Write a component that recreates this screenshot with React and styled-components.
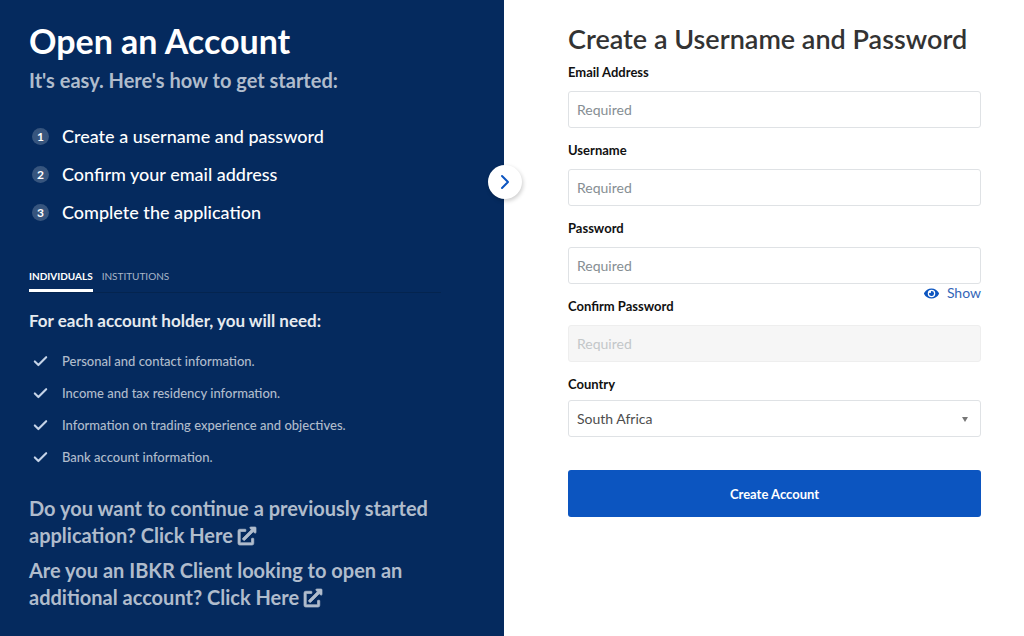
import React, { useState } from "react";
import styled, { createGlobalStyle } from "styled-components";
import { Check, ChevronRight } from "lucide-react";
import { FaExternalLinkAlt, FaEye } from "react-icons/fa";

const steps = [
  "Create a username and password",
  "Confirm your email address",
  "Complete the application",
];

const tabs = [
  { key: "individuals", label: "Individuals" },
  { key: "institutions", label: "Institutions" },
];

const requirements = [
  "Personal and contact information.",
  "Income and tax residency information.",
  "Information on trading experience and objectives.",
  "Bank account information.",
];

const App = () => {
  const [activeTab, setActiveTab] = useState("individuals");
  const [showPassword, setShowPassword] = useState(false);

  return (
    <>
      <GlobalStyle />
      <StyledPage>
        <StyledIntro>
          <StyledTitle>Open an Account</StyledTitle>
          <StyledSubtitle>It's easy. Here's how to get started:</StyledSubtitle>

          <StyledSteps>
            {steps.map((step, index) => (
              <StyledStep key={step}>
                <StyledStepNumber>{index + 1}</StyledStepNumber>
                {step}
              </StyledStep>
            ))}
          </StyledSteps>

          <StyledTabs role="tablist">
            {tabs.map((tab) => (
              <StyledTab
                key={tab.key}
                type="button"
                role="tab"
                aria-selected={activeTab === tab.key}
                $active={activeTab === tab.key}
                onClick={() => setActiveTab(tab.key)}
              >
                {tab.label}
              </StyledTab>
            ))}
          </StyledTabs>

          <StyledListTitle>For each account holder, you will need:</StyledListTitle>
          <StyledRequirements>
            {requirements.map((item) => (
              <StyledRequirement key={item}>
                <Check size={17} strokeWidth={3} />
                {item}
              </StyledRequirement>
            ))}
          </StyledRequirements>

          <StyledQuestion>
            <a href="#continue">
              Do you want to continue a previously started application? Click
              Here <FaExternalLinkAlt />
            </a>
          </StyledQuestion>
          <StyledQuestion>
            <a href="#additional">
              Are you an IBKR Client looking to open an additional account?
              Click Here <FaExternalLinkAlt />
            </a>
          </StyledQuestion>

          <StyledToggle type="button" aria-label="Toggle panel">
            <ChevronRight size={24} strokeWidth={2} />
          </StyledToggle>
        </StyledIntro>

        <StyledForm onSubmit={(e) => e.preventDefault()}>
          <StyledFormTitle>Create a Username and Password</StyledFormTitle>
          <StyledField>
            <StyledLabel htmlFor="email">Email Address</StyledLabel>
            <StyledInput id="email" type="email" placeholder="Required" />
          </StyledField>
          <StyledField>
            <StyledLabel htmlFor="username">Username</StyledLabel>
            <StyledInput id="username" type="text" placeholder="Required" />
          </StyledField>
          <StyledField>
            <StyledLabel htmlFor="password">Password</StyledLabel>
            <StyledInput
              id="password"
              type={showPassword ? "text" : "password"}
              placeholder="Required"
            />
            <StyledShow
              type="button"
              onClick={() => setShowPassword(!showPassword)}
            >
              <FaEye />
              Show
            </StyledShow>
          </StyledField>
          <StyledField>
            <StyledLabel htmlFor="confirm">Confirm Password</StyledLabel>
            <StyledInput
              id="confirm"
              type="password"
              placeholder="Required"
              disabled
            />
          </StyledField>
          <StyledField $tight>
            <StyledLabel htmlFor="country">Country</StyledLabel>
            <StyledSelectBox>
              <StyledSelect id="country" defaultValue="South Africa">
                <option>South Africa</option>
              </StyledSelect>
            </StyledSelectBox>
          </StyledField>
          <StyledSubmit type="submit">Create Account</StyledSubmit>
        </StyledForm>
      </StyledPage>
    </>
  );
};

const GlobalStyle = createGlobalStyle`
  * {
    box-sizing: border-box;
  }

  body {
    margin: 0;
    background: #ffffff;
    font-family: Lato, "Liberation Sans", sans-serif;
  }

  button,
  input,
  select {
    font-family: inherit;
  }
`;

const StyledPage = styled.main`
  display: grid;
  grid-template-columns: 63fr 65fr;
  min-height: 100vh;
`;

const StyledIntro = styled.section`
  position: relative;
  padding: 21px 63px 24px 29px;
  background: #052a5e;
  color: #ffffff;
`;

const StyledTitle = styled.h1`
  margin: 0;
  font-size: 34px;
  font-weight: 700;
  line-height: 40px;
`;

const StyledSubtitle = styled.p`
  margin: 5px 0 0;
  color: #b0bccc;
  font-size: 20px;
  font-weight: 700;
  line-height: 28px;
`;

const StyledSteps = styled.ol`
  display: flex;
  flex-direction: column;
  gap: 14px;
  margin: 30px 0 0;
  padding: 0;
  list-style: none;
`;

const StyledStep = styled.li`
  display: flex;
  align-items: center;
  gap: 13px;
  padding-left: 3px;
  font-size: 18px;
  font-weight: 500;
  line-height: 24px;
`;

const StyledStepNumber = styled.span`
  display: flex;
  align-items: center;
  justify-content: center;
  width: 17px;
  height: 17px;
  border-radius: 50%;
  background: #37557e;
  font-size: 12px;
  font-weight: 700;
  line-height: 17px;
`;

const StyledTabs = styled.div`
  display: flex;
  gap: 9px;
  margin-top: 44px;
  border-bottom: 1px solid #04244f;
`;

const StyledTab = styled.button`
  padding: 0 0 5px;
  border: none;
  border-bottom: 3px solid
    ${({ $active }) => ($active ? "#ffffff" : "transparent")};
  background: transparent;
  color: ${({ $active }) => ($active ? "#ffffff" : "#a9b6c8")};
  font-size: 10px;
  font-weight: ${({ $active }) => ($active ? 700 : 400)};
  line-height: 16px;
  text-transform: uppercase;
  cursor: pointer;
`;

const StyledListTitle = styled.h2`
  margin: 17px 0 0;
  color: #e6eaef;
  font-size: 17px;
  font-weight: 700;
  line-height: 22px;
`;

const StyledRequirements = styled.ul`
  display: flex;
  flex-direction: column;
  gap: 12px;
  margin: 19px 0 0;
  padding: 0;
  list-style: none;
`;

const StyledRequirement = styled.li`
  display: flex;
  align-items: center;
  gap: 13px;
  padding-left: 3px;
  color: #b0bccc;
  font-size: 13px;
  font-weight: 500;
  line-height: 20px;

  svg {
    color: #c5d3e8;
  }
`;

const StyledQuestion = styled.p`
  margin: 8px 0 0;
  color: #b0bccc;
  font-size: 20px;
  font-weight: 700;
  line-height: 27px;

  ul + & {
    margin-top: 28px;
  }

  a {
    color: inherit;
    text-decoration: none;
  }

  svg {
    overflow: visible;
    font-size: 18px;
    stroke: currentColor;
    stroke-width: 20px;
    vertical-align: -2px;
  }
`;

const StyledToggle = styled.button`
  position: absolute;
  top: 165px;
  right: -18px;
  display: flex;
  align-items: center;
  justify-content: center;
  width: 34px;
  height: 34px;
  padding: 0;
  border: none;
  border-radius: 50%;
  background: #ffffff;
  box-shadow: 1px 2px 4px rgba(0, 0, 0, 0.2);
  color: #0c55c0;
  cursor: pointer;
`;

const StyledForm = styled.form`
  padding: 21px 43px 24px 64px;
`;

const StyledFormTitle = styled.h2`
  margin: 0 0 5px;
  color: #333333;
  font-size: 27px;
  font-weight: 600;
  line-height: 35px;
`;

const StyledField = styled.div`
  position: relative;
  display: flex;
  flex-direction: column;
  gap: ${({ $tight }) => ($tight ? 5 : 8)}px;
  margin-bottom: 11px;
`;

const StyledLabel = styled.label`
  color: #111111;
  font-size: 13px;
  font-weight: 700;
  line-height: 22px;
`;

const StyledInput = styled.input`
  width: 100%;
  height: 37px;
  padding: 0 8px;
  border: 1px solid #dfe2e5;
  border-radius: 3px;
  background: #ffffff;
  color: #4d4d4d;
  font-size: 14px;

  &::placeholder {
    color: #868e93;
    opacity: 1;
  }

  &:disabled {
    border-color: #eeeeee;
    background: #f6f6f6;
  }

  &:disabled::placeholder {
    color: #c3c7c9;
  }
`;

const StyledShow = styled.button`
  position: absolute;
  top: 100%;
  right: 0;
  display: flex;
  align-items: center;
  gap: 8px;
  padding: 0;
  border: none;
  background: transparent;
  color: #3466b8;
  font-size: 14px;
  line-height: 18px;
  cursor: pointer;

  svg {
    color: #0c55c0;
    font-size: 15px;
  }
`;

const StyledSelectBox = styled.div`
  position: relative;

  &::after {
    content: "";
    position: absolute;
    top: 17px;
    right: 13px;
    border: 3px solid transparent;
    border-top: 5px solid #777777;
    border-bottom: none;
    pointer-events: none;
  }
`;

const StyledSelect = styled.select`
  width: 100%;
  height: 37px;
  padding: 0 8px;
  border: 1px solid #dfe2e5;
  border-radius: 3px;
  background: #ffffff;
  color: #4d4d4d;
  font-size: 14px;
  appearance: none;
`;

const StyledSubmit = styled.button`
  display: block;
  width: 100%;
  height: 47px;
  margin-top: 33px;
  border: none;
  border-radius: 3px;
  background: #0c55c0;
  color: #ffffff;
  font-size: 13px;
  font-weight: 700;
  cursor: pointer;
`;

export default App;
